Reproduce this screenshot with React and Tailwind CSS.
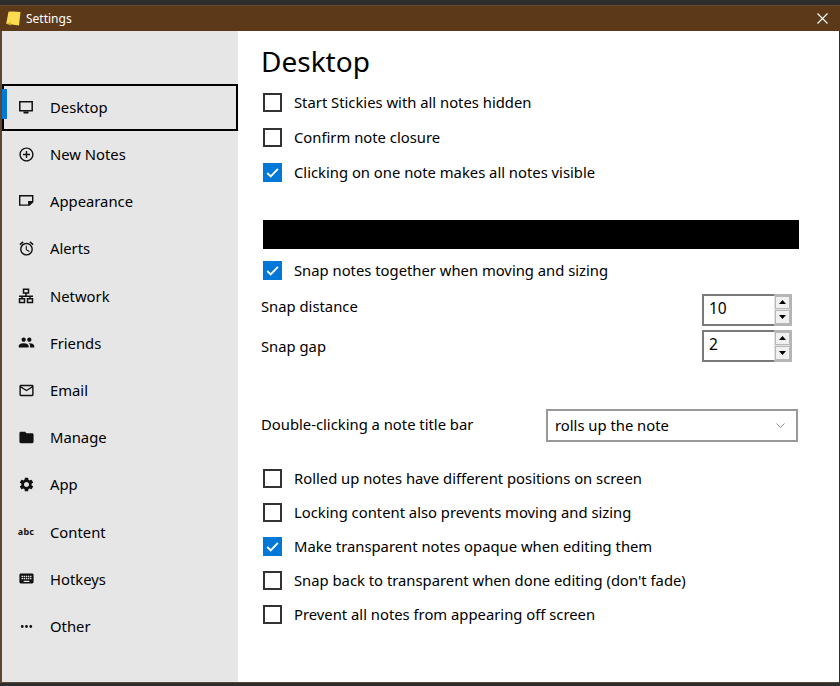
import React from "react";
import {
  MdAddCircleOutline, MdAccessAlarm, MdPeople,
  MdMailOutline, MdFolder, MdSettings, MdKeyboard, MdMoreHoriz,
} from "react-icons/md";

const NoteIcon = () => (
  <svg viewBox="0 0 16 16" width="16" height="16" fill="none" stroke="currentColor" strokeWidth="1.4">
    <path d="M1.700 2.700h13v6.200l-3.400 3.200H1.700z" />
    <path d="M10.800 12.100V8.700h3.800" fill="currentColor" />
  </svg>
);

const MonitorIcon = () => (
  <svg viewBox="0 0 16 16" width="16" height="16" fill="none" stroke="currentColor">
    <path d="M1.800 2.700h12.400v9H1.800z" strokeWidth="1.500" />
    <path d="M5.500 13.500h5" strokeWidth="2" />
  </svg>
);

const NetIcon = () => (
  <svg viewBox="0 0 16 16" width="16" height="16" fill="none" stroke="currentColor" strokeWidth="1.500">
    <path d="M5.500 1.200h5v3.800h-5zM1.500 10.800h5v3.800h-5zM9.500 10.800h5v3.800h-5z" />
    <path d="M8 5v3M1 8.200h14M4 8.200v2.600M12 8.200v2.600" />
  </svg>
);

const AbcIcon = () => (
  <span className="text-[9px] leading-none font-bold tracking-[0.2px] whitespace-nowrap">abc</span>
);

const nav = [
  ["Desktop", MonitorIcon, true],
  ["New Notes", MdAddCircleOutline],
  ["Appearance", NoteIcon],
  ["Alerts", MdAccessAlarm],
  ["Network", NetIcon],
  ["Friends", MdPeople],
  ["Email", MdMailOutline],
  ["Manage", MdFolder],
  ["App", MdSettings],
  ["Content", AbcIcon],
  ["Hotkeys", MdKeyboard],
  ["Other", MdMoreHoriz],
];

function Check({ label, checked, className = "" }) {
  return (
    <div className={`flex items-center h-[34px] ${className}`}>
      {checked ? (
        <span className="w-[19px] h-[19px] ml-[2px] mr-[1px] bg-[#0078d7] flex items-center justify-center shrink-0">
          <svg viewBox="0 0 20 20" width="19" height="19" fill="none" stroke="#fff" strokeWidth="2">
            <path d="M4.500 10.500l3.600 3.600 7.600-8" />
          </svg>
        </span>
      ) : (
        <span className="w-[19px] h-[19px] ml-[2px] mr-[1px] border-2 border-[#333333] bg-white shrink-0" />
      )}
      <span className="ml-[11px] whitespace-nowrap">{label}</span>
    </div>
  );
}

function Spin({ value, label, className = "", labelClass = "" }) {
  return (
    <div className={`flex items-center justify-between h-[32px] pr-[7px] ${className}`}>
      <span className={labelClass}>{label}</span>
      <div className="flex w-[90px] h-[32px]">
        <div className="w-[72px] border-2 border-r-0 border-[#7a7a7a] pl-[5px] pb-[2px] flex items-center text-[15.5px]">{value}</div>
        <div className="w-[18px] border-2 border-l-0 border-[#b4b4b4] bg-[#e1e1e1] flex flex-col gap-[1px] pl-[1px]">
          <div className="flex-1 bg-[#f0f0f0] border border-[#b8b8b8] flex items-center justify-center">
            <svg width="7" height="4"><path d="M3.500 0L7 4H0z" fill="#000" /></svg>
          </div>
          <div className="flex-1 bg-[#f0f0f0] border border-[#b8b8b8] flex items-center justify-center">
            <svg width="7" height="4"><path d="M0 0h7L3.500 4z" fill="#000" /></svg>
          </div>
        </div>
      </div>
    </div>
  );
}

export default function App() {
  return (
    <div
      className="h-[686px] w-[840px] bg-[#2d2d2d] pt-[5px] pb-[3px] flex flex-col text-black text-[14.8px] overflow-hidden"
      style={{ fontFamily: '"Noto Sans", "Open Sans", sans-serif' }}
    >
      <div className="h-[26px] bg-[#5b3919] border-t border-[#6b4a2a] flex items-center pl-[5px] pr-[12px] text-white text-[12px] shrink-0">
        <svg viewBox="0 0 16 16" width="16" height="16">
          <path d="M3.500 .8c3.500-.6 8-.5 12 .2L14 14.500 1.200 12.800z" fill="#fbdc4e" />
          <path d="M1 12.800c2.500.2 3.800-1 4.800-2.800-.6 2-.4 3.200.4 4.400z" fill="#d9a92c" />
        </svg>
        <span className="ml-[5px]">Settings</span>
        <svg className="ml-auto" width="11" height="11" viewBox="0 0 11 11" stroke="#fff" strokeWidth="1.100">
          <path d="M.500.500l10 10M10.500.500l-10 10" />
        </svg>
      </div>
      <div className="flex-1 flex border-l-2 border-b border-[#5a4632] min-h-0 w-[839px]">
        <aside className="w-[236px] bg-[#e6e6e6] pt-[53px] shrink-0">
          {nav.map(([label, Icon, active]) => (
            <div
              key={label}
              className={`relative flex items-center ${active ? "h-[46.6px] border-2 border-black" : "h-[47.2px]"}`}
            >
              {active && <span className="absolute left-[-2px] top-[3px] w-[5px] h-[30px] bg-[#0078d7]" />}
              <span className={`w-[16px] flex justify-center text-[#111] ${active ? "ml-[14px]" : "ml-[16px]"}`}>
                <Icon size={17} className="shrink-0" />
              </span>
              <span className="ml-[16px]">{label}</span>
            </div>
          ))}
        </aside>
        <main className="flex-1 bg-white pl-[23px] pr-[40px] min-w-0">
          <h1 className="text-[28px] leading-[38px] mt-[11px] font-normal">Desktop</h1>
          <Check className="mt-[5px]" label="Start Stickies with all notes hidden" />
          <Check className="mt-[1px]" label="Confirm note closure" />
          <Check className="mt-[1.500px]" checked label="Clicking on one note makes all notes visible" />
          <div className="h-[29px] bg-black mt-[30px] ml-[2px]" />
          <Check className="mt-[5px]" checked label="Snap notes together when moving and sizing" />
          <Spin className="mt-[6px]" labelClass="pb-[6px]" label="Snap distance" value="10" />
          <Spin className="mt-[4px]" labelClass="pt-[2px]" label="Snap gap" value="2" />
          <div className="flex items-center justify-between mt-[47px] h-[33px] pr-[1px]">
            <span className="pb-[2px]">Double-clicking a note title bar</span>
            <div className="w-[252px] h-[33px] border-2 border-[#999999] flex items-center pl-[7px] pr-[11px] justify-between">
              <span>rolls up the note</span>
              <svg width="9" height="5" viewBox="0 0 9 5" fill="none" stroke="#8a8a8a" strokeWidth="1"><path d="M.500.500L4.500 4.500 8.500.500" /></svg>
            </div>
          </div>
          <Check className="mt-[20px]" label="Rolled up notes have different positions on screen" />
          <Check label="Locking content also prevents moving and sizing" />
          <Check checked label="Make transparent notes opaque when editing them" />
          <Check label="Snap back to transparent when done editing (don't fade)" />
          <Check label="Prevent all notes from appearing off screen" />
        </main>
      </div>
    </div>
  );
}
